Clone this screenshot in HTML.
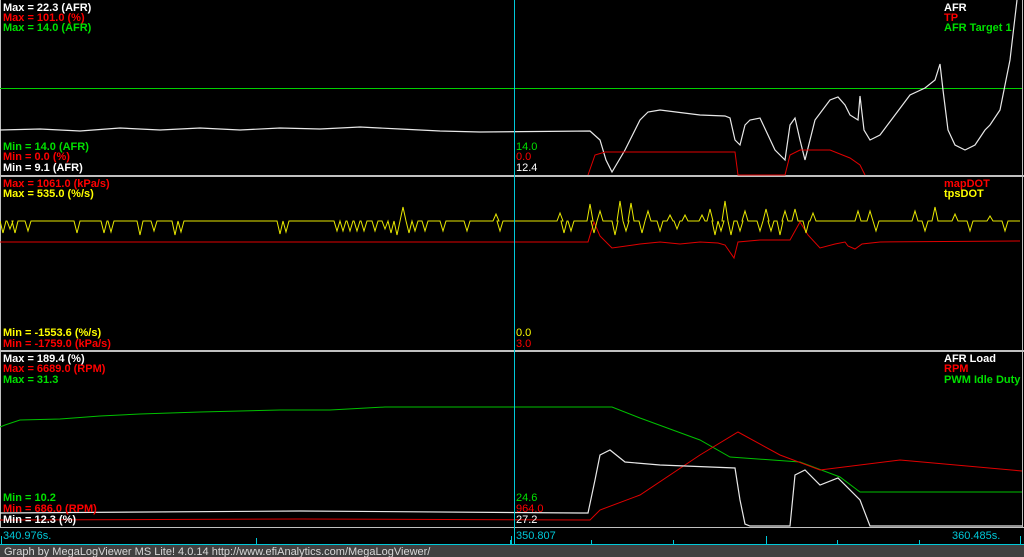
<!DOCTYPE html>
<html><head><meta charset="utf-8"><style>
html,body{margin:0;padding:0;background:#000;width:1024px;height:557px;overflow:hidden}
svg{display:block}
text{font-family:"Liberation Sans",Arial,sans-serif;font-size:11px}
.b{font-weight:bold}
</style></head><body>
<svg id="s" width="1024" height="557" xmlns="http://www.w3.org/2000/svg">
<rect width="1024" height="557" fill="#000"/>
<line x1="0.5" y1="0" x2="0.5" y2="528" stroke="#c0c0c0"/>
<line x1="1022.5" y1="0" x2="1022.5" y2="528" stroke="#c0c0c0"/>
<rect x="0" y="175" width="1024" height="2" fill="#c0c0c0"/>
<rect x="0" y="350" width="1024" height="2" fill="#c0c0c0"/>
<rect x="0" y="527" width="1024" height="1" fill="#c0c0c0"/>
<line x1="0" y1="88.5" x2="1022" y2="88.5" stroke="#00d000"/>
<polyline fill="none" stroke="#e8e8e8" stroke-width="1.2" points="0,130 40,129 80,131 120,128 160,130 200,128 240,130 280,128 320,129 360,127 400,129 440,131 480,132 590,131 600,140 606,160 612,172 625,150 640,120 648,112 660,110 700,115 725,116 730,118 735,140 740,145 745,125 750,120 760,118 775,150 785,160 790,125 795,118 800,140 805,160 815,120 830,100 838,97 845,105 850,115 858,120 860,96 864,130 870,140 880,135 895,115 910,95 925,88 935,80 940,64 943,90 948,130 955,145 965,150 975,145 985,130 990,125 1000,110 1010,60 1017,0"/>
<polyline fill="none" stroke="#e00000" points="588,175 595,155 605,152 735,152 738,175 785,175 790,155 800,150 830,150 850,158 860,165 865,175"/>
<text x="3" y="11" fill="#fff" class="b">Max = 22.3 (AFR)</text>
<text x="3" y="21" fill="#ff0000" class="b">Max = 101.0 (%)</text>
<text x="3" y="31" fill="#00e000" class="b">Max = 14.0 (AFR)</text>
<text x="3" y="150" fill="#00e000" class="b">Min = 14.0 (AFR)</text>
<text x="3" y="160" fill="#ff0000" class="b">Min = 0.0 (%)</text>
<text x="3" y="171" fill="#fff" class="b">Min = 9.1 (AFR)</text>
<text x="944" y="11" fill="#fff" class="b">AFR</text>
<text x="944" y="21" fill="#ff0000" class="b">TP</text>
<text x="944" y="31" fill="#00e000" class="b">AFR Target 1</text>
<text x="516" y="150" fill="#00e000">14.0</text>
<text x="516" y="160" fill="#ff0000">0.0</text>
<text x="516" y="171" fill="#fff">12.4</text>
<polyline id="red2" fill="none" stroke="#e00000"/>
<polyline id="yel" fill="none" stroke="#e8e800"/>
<text x="3" y="187" fill="#ff0000" class="b">Max = 1061.0 (kPa/s)</text>
<text x="3" y="197" fill="#ffff00" class="b">Max = 535.0 (%/s)</text>
<text x="3" y="336" fill="#ffff00" class="b">Min = -1553.6 (%/s)</text>
<text x="3" y="347" fill="#ff0000" class="b">Min = -1759.0 (kPa/s)</text>
<text x="944" y="187" fill="#ff0000" class="b">mapDOT</text>
<text x="944" y="197" fill="#ffff00" class="b">tpsDOT</text>
<text x="516" y="336" fill="#ffff00">0.0</text>
<text x="516" y="347" fill="#ff0000">3.0</text>
<polyline fill="none" stroke="#00c000" points="0,427 5,425 20,420 60,419 100,416 140,414 200,412 280,410 330,410 385,407 612,407 640,418 700,440 730,457 800,462 840,477 860,492 1022,492"/>
<polyline fill="none" stroke="#e00000" points="0,520 300,519 590,520 600,510 640,495 700,455 738,432 780,455 820,470 900,460 1022,471"/>
<polyline fill="none" stroke="#e8e8e8" stroke-width="1.2" points="0,513 300,511 580,513 588,513 595,480 600,455 610,450 625,462 660,465 735,468 740,500 745,524 750,526 790,526 795,475 805,470 820,485 838,478 860,500 870,526 1022,526"/>
<text x="3" y="362" fill="#fff" class="b">Max = 189.4 (%)</text>
<text x="3" y="372" fill="#ff0000" class="b">Max = 6689.0 (RPM)</text>
<text x="3" y="383" fill="#00e000" class="b">Max = 31.3</text>
<text x="3" y="501" fill="#00e000" class="b">Min = 10.2</text>
<text x="3" y="512" fill="#ff0000" class="b">Min = 686.0 (RPM)</text>
<text x="3" y="523" fill="#fff" class="b">Min = 12.3 (%)</text>
<text x="944" y="362" fill="#fff" class="b">AFR Load</text>
<text x="944" y="372" fill="#ff0000" class="b">RPM</text>
<text x="944" y="383" fill="#00e000" class="b">PWM Idle Duty</text>
<text x="516" y="501" fill="#00e000">24.6</text>
<text x="516" y="512" fill="#ff0000">964.0</text>
<text x="516" y="523" fill="#fff">27.2</text>
<line x1="514.5" y1="0" x2="514.5" y2="545" stroke="#00c8d8"/>
<rect x="0" y="544" width="1024" height="1" fill="#00c8d8"/>
<g stroke="#00c8d8">
<line x1="1.5" y1="536" x2="1.5" y2="545"/>
<line x1="256.5" y1="538" x2="256.5" y2="545"/>
<line x1="510.5" y1="540" x2="510.5" y2="545"/>
<line x1="766.5" y1="536" x2="766.5" y2="545"/>
<line x1="591.5" y1="540" x2="591.5" y2="545"/>
<line x1="673.5" y1="540" x2="673.5" y2="545"/>
<line x1="837.5" y1="540" x2="837.5" y2="545"/>
<line x1="919.5" y1="540" x2="919.5" y2="545"/>
<line x1="1020.5" y1="536" x2="1020.5" y2="545"/>
<line x1="511.5" y1="536" x2="511.5" y2="545"/>
</g>
<text x="3" y="539" fill="#00c8d8">340.976s.</text>
<text x="516" y="539" fill="#00c8d8">350.807</text>
<text x="952" y="539" fill="#00c8d8">360.485s.</text>
<rect x="0" y="545" width="1024" height="12" fill="#404040"/>
<text x="4" y="555" fill="#d8d8d8">Graph by MegaLogViewer MS Lite! 4.0.14 http://www.efiAnalytics.com/MegaLogViewer/</text>
</svg>
<script>
(function(){
 var base=221;
 var dips=[[3,12],[10,8],[15,12],[28,10],[77,12],[104,12],[111,11],[140,14],[154,10],[175,14],[181,11],[280,13],[286,11],[337,10],[343,10],[350,10],[357,10],[364,10],[375,10],[385,8],[391,12],[397,14],[403,-14],[409,12],[415,10],[425,10],[443,10],[467,10],[500,10],[496,-7],
 [560,-8],[564,12],[571,10],[590,-17],[594,12],[600,-10],[615,14],[620,-20],[626,10],[631,-18],[642,12],[648,-10],[660,10],[670,-6],[677,8],[685,-6],[702,-6],[710,-12],[715,14],[721,10],[725,-20],[731,14],[740,10],[745,-10],[760,10],[766,-12],[771,10],[780,14],[785,-10],[795,-12],[806,12],[813,-8],[858,-10],[870,-10],[876,10],[915,-10],[925,10],[935,-14],[955,-7],[970,10],[990,-5],[1005,10]];
 dips.sort(function(a,b){return a[0]-b[0];});
 var out=["0,"+base];
 dips.forEach(function(d){out.push((d[0]-3)+","+base);out.push(d[0]+","+(base+d[1]));out.push((d[0]+3)+","+base);});
 out.push("1020,"+base);
 document.getElementById("yel").setAttribute("points",out.join(" "));
 document.getElementById("red2").setAttribute("points","0,242 588,242 594,222 600,236 612,248 640,244 660,242 680,244 700,242 718,243 725,245 734,258 738,242 760,240 790,240 800,222 808,235 820,248 835,244 845,242 848,246 855,249 862,244 880,242 1020,241");
})();
</script>
</body></html>
